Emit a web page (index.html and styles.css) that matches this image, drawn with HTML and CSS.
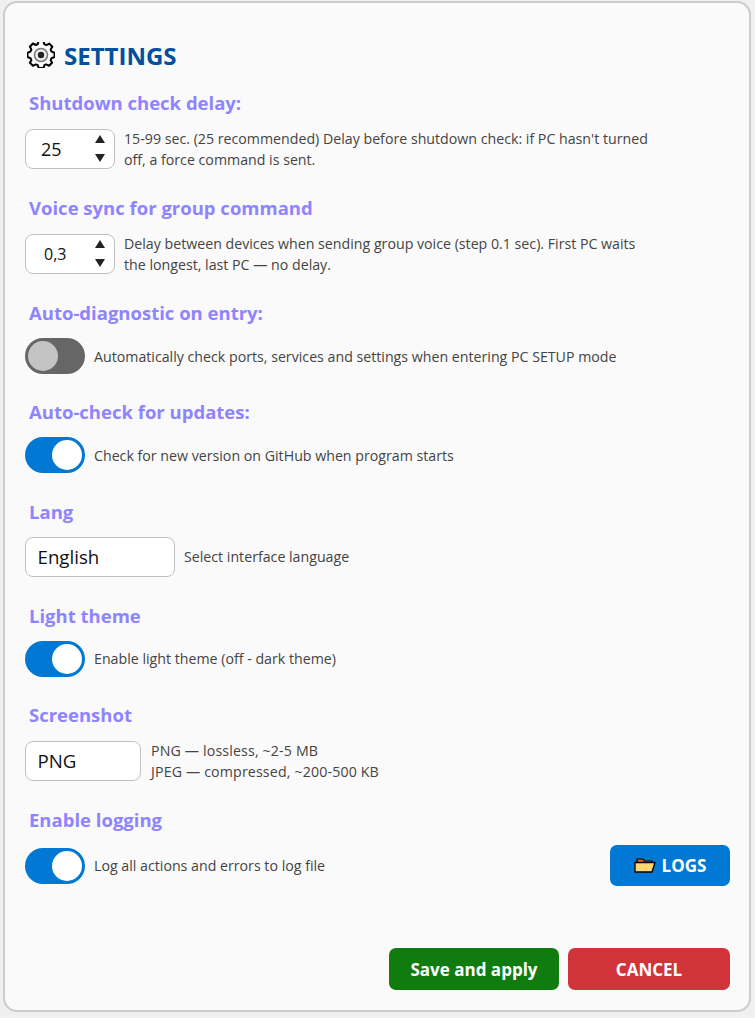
FILE: index.html
```html
<!DOCTYPE html>
<html lang="en">
<head>
    <meta charset="UTF-8">
    <title>Settings</title>
    <link rel="stylesheet" href="styles.css">
</head>
<body>
    <div class="panel">
        <h1 class="title">
            <svg class="gear" width="28" height="26" viewBox="0 0 28 26">
                <path d="M11.500 1.500h5l.8 3.200 2 .9 3-1.500 3 3.200-1.600 2.800.8 2 3 1.200v4.200l-3 1.200-.8 2 1.400 2.600-3 3-3-1.400-1.700.8-.8 2.700h-5l-.8-2.700-1.900-.8-3 1.400-3-3 1.500-2.600-.9-2-3-1.200v-4.200l3-1.300.9-2-1.500-2.800 3-3.200 3 1.500 1.900-.9z" transform="translate(0 -2.500)" fill="#fafafa" stroke="#000" stroke-width="2" stroke-linejoin="round"/>
                <circle cx="14" cy="13" r="6.500" fill="#eee" stroke="#777" stroke-width="1.500"/>
                <circle cx="14" cy="13" r="3.200" fill="#222"/>
            </svg>
            SETTINGS
        </h1>

        <div class="section">
            <div class="label">Shutdown check delay:</div>
            <div class="row">
                <div class="spin">
                    <span class="spin-value">25</span>
                    <div class="arrows"><span class="up"></span><span class="down"></span></div>
                </div>
                <p class="hint hint-wide">15-99 sec. (25 recommended) Delay before shutdown check: if PC hasn't turned off, a force command is sent.</p>
            </div>
        </div>

        <div class="section">
            <div class="label">Voice sync for group command</div>
            <div class="row">
                <div class="spin">
                    <span class="spin-value spin-small">0,3</span>
                    <div class="arrows"><span class="up"></span><span class="down"></span></div>
                </div>
                <p class="hint hint-wide">Delay between devices when sending group voice (step 0.1 sec). First PC waits the longest, last PC — no delay.</p>
            </div>
        </div>

        <div class="section">
            <div class="label">Auto-diagnostic on entry:</div>
            <div class="row">
                <div class="toggle off"><span class="knob"></span></div>
                <p class="hint">Automatically check ports, services and settings when entering PC SETUP mode</p>
            </div>
        </div>

        <div class="section section-tight">
            <div class="label">Auto-check for updates:</div>
            <div class="row">
                <div class="toggle"><span class="knob"></span></div>
                <p class="hint">Check for new version on GitHub when program starts</p>
            </div>
        </div>

        <div class="section">
            <div class="label">Lang</div>
            <div class="row">
                <div class="select select-lang">English</div>
                <p class="hint">Select interface language</p>
            </div>
        </div>

        <div class="section section-loose">
            <div class="label">Light theme</div>
            <div class="row">
                <div class="toggle"><span class="knob"></span></div>
                <p class="hint">Enable light theme (off - dark theme)</p>
            </div>
        </div>

        <div class="section">
            <div class="label">Screenshot</div>
            <div class="row">
                <div class="select select-shot">PNG</div>
                <p class="hint hint-formats">PNG — lossless, ~2-5 MB<br>JPEG — compressed, ~200-500 KB</p>
            </div>
        </div>

        <div class="section">
            <div class="label">Enable logging</div>
            <div class="row">
                <div class="toggle"><span class="knob"></span></div>
                <p class="hint">Log all actions and errors to log file</p>
                <button class="btn btn-logs">
                    <svg width="22" height="15" viewBox="0 0 22 15">
                        <path d="M3 1h6l1.500 2h7.500v2H3z" fill="#d9641e" stroke="#000" stroke-width="1.200"/>
                        <path d="M1 14V4.500h20L18 14z" fill="#ffd76e" stroke="#000" stroke-width="1.300" stroke-linejoin="round"/>
                    </svg>
                    LOGS
                </button>
            </div>
        </div>

        <div class="footer">
            <button class="btn btn-save">Save and apply</button>
            <button class="btn btn-cancel">CANCEL</button>
        </div>
    </div>
</body>
</html>
```

FILE: styles.css
```css
html, body {
    height: 100%;
}
body {
    margin: 0;
    background-color: #f0f0f0;
    font-family: "Open Sans", "Noto Sans", sans-serif;
    overflow: hidden;
}
.panel {
    box-sizing: border-box;
    width: 748px;
    height: 1011px;
    margin: 1px 0 0 3px;
    padding: 36px 19px 20px 20px;
    background-color: #fafafa;
    border: 2px solid #cccccc;
    border-radius: 14px;
    display: flex;
    flex-direction: column;
}
.title {
    display: flex;
    align-items: center;
    gap: 9px;
    height: 32px;
    margin: 0 0 0 2px;
    font-size: 24px;
    font-weight: 700;
    color: #0050a0;
}
.gear {
    flex: none;
}
.section {
    margin-top: 25.300px;
}
.title + .section {
    margin-top: 18.700px;
}
.section-tight {
    margin-top: 25px;
}
.section-loose {
    margin-top: 26px;
}
.label {
    height: 26px;
    line-height: 26px;
    margin: 0 0 12px 4px;
    font-size: 18.500px;
    font-weight: 700;
    color: #8f84ff;
}
.row {
    display: flex;
    align-items: center;
    gap: 9px;
}
.hint {
    margin: 0;
    font-size: 14.200px;
    line-height: 21px;
    color: #444444;
}
.hint-wide {
    width: 535px;
}
.hint-formats {
    margin-left: 1px;
    letter-spacing: 0.150px;
}
.spin {
    box-sizing: border-box;
    flex: none;
    width: 90px;
    height: 40px;
    padding: 0 9px 0 15px;
    background-color: #ffffff;
    border: 1.500px solid #c0c0c0;
    border-radius: 8px;
    display: flex;
    align-items: center;
    justify-content: space-between;
}
.spin-value {
    font-size: 18px;
    color: #111111;
}
.spin-small {
    font-size: 16px;
    margin-left: 3px;
}
.arrows {
    display: flex;
    flex-direction: column;
    gap: 11px;
}
.up, .down {
    display: block;
    width: 0;
    height: 0;
    border-left: 5.500px solid transparent;
    border-right: 5.500px solid transparent;
}
.up {
    border-bottom: 8px solid #222222;
}
.down {
    border-top: 8px solid #222222;
}
.toggle {
    box-sizing: border-box;
    flex: none;
    width: 60px;
    height: 36px;
    padding: 3px;
    background-color: #0078d4;
    border-radius: 18px;
    display: flex;
    justify-content: flex-end;
}
.toggle.off {
    background-color: #666666;
    justify-content: flex-start;
}
.knob {
    width: 30px;
    height: 30px;
    background-color: #ffffff;
    border-radius: 50%;
}
.off .knob {
    background-color: #c4c4c4;
}
.select {
    box-sizing: border-box;
    flex: none;
    height: 40px;
    padding-left: 11.500px;
    background-color: #ffffff;
    border: 1.500px solid #c0c0c0;
    border-radius: 8px;
    font-size: 18.700px;
    line-height: 38px;
    color: #111111;
}
.select-lang {
    width: 150px;
}
.select-shot {
    width: 116px;
}
.btn {
    border: none;
    border-radius: 7px;
    font-family: inherit;
    font-size: 17px;
    font-weight: 700;
    color: #ffffff;
    cursor: pointer;
}
.btn-logs {
    width: 120px;
    height: 41px;
    margin-left: auto;
    background-color: #0078d4;
    display: flex;
    align-items: center;
    justify-content: center;
    gap: 6px;
}
.footer {
    margin-top: auto;
    display: flex;
    justify-content: flex-end;
    gap: 9px;
}
.btn-save {
    width: 170px;
    height: 42px;
    background-color: #107c10;
}
.btn-cancel {
    width: 162px;
    height: 42px;
    background-color: #d13438;
}
```
